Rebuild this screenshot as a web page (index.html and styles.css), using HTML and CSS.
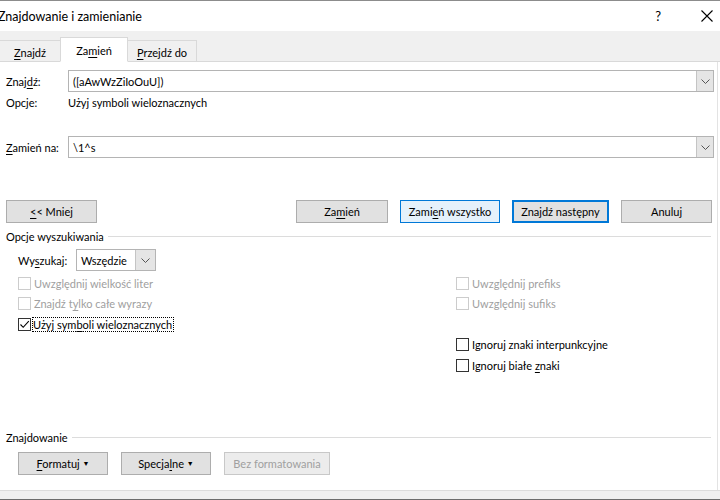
FILE: index.html
```html
<!DOCTYPE html>
<html>
<head>
  <title>Znajdowanie i zamienianie</title>
  <link rel="stylesheet" href="styles.css">
</head>
<body>
  <div class="titlebar">
    <span class="title">Znajdowanie i zamienianie</span>
    <span class="help">?</span>
    <svg class="close" width="12" height="12" viewBox="0 0 12 12">
      <path d="M0.5 0.5 L11.5 11.5 M11.5 0.5 L0.5 11.5" stroke="#000" stroke-width="1.1" fill="none"/>
    </svg>
  </div>

  <div class="tabs">
    <div class="tab t-find"><u>Z</u>najdź</div>
    <div class="tab t-replace active">Za<u>m</u>ień</div>
    <div class="tab t-goto"><u>P</u>rzejdź do</div>
    <div class="tab-rest"></div>
  </div>

  <div class="panel">
    <div class="field-row find-row">
      <label class="label">Znaj<u>d</u>ź:</label>
      <div class="combo">
        <span class="combo-text">([aAwWzZiIoOuU])</span>
        <span class="combo-btn">
          <svg width="9" height="5" viewBox="0 0 9 5"><path d="M0.5 0.5 L4.5 4.5 L8.5 0.5" stroke="#555" fill="none"/></svg>
        </span>
      </div>
    </div>
    <div class="opts-row">
      <span class="label">Opcje:</span>
      <span>Użyj symboli wieloznacznych</span>
    </div>

    <div class="field-row replace-row">
      <label class="label"><u>Z</u>amień na:</label>
      <div class="combo">
        <span class="combo-text">\1^s</span>
        <span class="combo-btn">
          <svg width="9" height="5" viewBox="0 0 9 5"><path d="M0.5 0.5 L4.5 4.5 L8.5 0.5" stroke="#555" fill="none"/></svg>
        </span>
      </div>
    </div>

    <div class="button-row">
      <button class="btn w-less"><u>&lt;</u>&lt; Mniej</button>
      <div class="button-group">
        <button class="btn w-replace">Za<u>m</u>ień</button>
        <button class="btn w-all hover">Zami<u>e</u>ń wszystko</button>
        <button class="btn w-next default">Znajdź następny</button>
        <button class="btn w-cancel">Anuluj</button>
      </div>
    </div>

    <div class="group-head search-head">
      <span>Opcje wyszukiwania</span>
      <div class="group-line"></div>
    </div>

    <div class="search-where">
      <span class="where-label">Wy<u>s</u>zukaj:</span>
      <div class="select">
        <span class="select-text">Wszędzie</span>
        <span class="select-btn">
          <svg width="9" height="5" viewBox="0 0 9 5"><path d="M0.5 0.5 L4.5 4.5 L8.5 0.5" stroke="#555" fill="none"/></svg>
        </span>
      </div>
    </div>

    <div class="options">
      <div class="col">
        <div class="check disabled"><span class="box"></span><span>Uwzględnij wielkość liter</span></div>
        <div class="check disabled"><span class="box"></span><span>Znajdź t<u>y</u>lko całe wyrazy</span></div>
        <div class="check">
          <span class="box">
            <svg width="11" height="11" viewBox="0 0 11 11"><path d="M1.5 5.5 L4.2 8.3 L9.8 2.2" stroke="#000" stroke-width="1.1" fill="none"/></svg>
          </span>
          <span class="focus">Użyj sym<u>b</u>oli wieloznacznych</span>
        </div>
      </div>
      <div class="col">
        <div class="check disabled"><span class="box"></span><span>Uwzględnij prefiks</span></div>
        <div class="check disabled"><span class="box"></span><span>Uwzględnij sufiks</span></div>
        <div class="check-gap"></div>
        <div class="check"><span class="box"></span><span>Ignoruj znaki interpunkcyjne</span></div>
        <div class="check"><span class="box"></span><span>Ignoruj białe <u>z</u>naki</span></div>
      </div>
    </div>

    <div class="group-head find-head">
      <span>Znajdowanie</span>
      <div class="group-line"></div>
    </div>

    <div class="format-row">
      <button class="btn w-fmt"><u>F</u>ormatuj <span class="caret">&#9660;</span></button>
      <button class="btn w-fmt">Specja<u>l</u>ne <span class="caret">&#9660;</span></button>
      <button class="btn w-none" disabled>Bez formatowania</button>
    </div>
  </div>

  <div class="bottom"></div>
</body>
</html>
```

FILE: styles.css
```css
body {
  margin: 0;
  width: 720px;
  height: 500px;
  overflow: hidden;
  background-color: #fff;
  font-family: Lato, "Noto Sans", sans-serif;
  font-size: 11px;
  color: #000;
}

u {
  text-decoration-thickness: 1px;
  text-underline-offset: 2px;
}

/* title bar */

.titlebar {
  height: 30px;
  border-top: 1px solid #8c8c8c;
  display: flex;
  align-items: center;
  background-color: #fff;
}

.title {
  margin-left: -2px;
  font-size: 12.5px;
  flex: 1;
  white-space: nowrap;
}

.help {
  font-size: 13px;
  margin-right: 40px;
}

.close {
  margin-right: 7px;
}

/* tabs */

.tabs {
  height: 31px;
  background-color: #f0f0f0;
  display: flex;
  align-items: flex-end;
}

.tab {
  height: 20px;
  line-height: 24px;
  text-align: center;
  white-space: nowrap;
  border: 1px solid #d9d9d9;
  background-color: #f0f0f0;
  margin-right: -1px;
}

.t-find {
  width: 60px;
  border-left: none;
}

.t-replace {
  width: 66px;
}

.t-goto {
  width: 68px;
}

.tab.active {
  height: 23px;
  line-height: 25px;
  background-color: #fff;
  border-bottom-color: #fff;
  position: relative;
  z-index: 1;
}

.tab-rest {
  flex: 1;
  border-bottom: 1px solid #d9d9d9;
}

/* panel */

.panel {
  height: 428px;
  border-right: 1px solid #e3e3e3;
  margin-right: 2px;
  display: flex;
  flex-direction: column;
}

.label {
  width: 62px;
  padding-left: 6px;
  white-space: nowrap;
}

.field-row {
  display: flex;
  align-items: center;
}

.find-row {
  margin-top: 8px;
}

.replace-row {
  margin-top: 25px;
}

.combo {
  width: 644px;
  height: 20px;
  border: 1px solid #b4b4b4;
  display: flex;
  align-items: center;
}

.combo-text {
  flex: 1;
  padding-left: 4px;
}

.combo-btn,
.select-btn {
  width: 16px;
  height: 20px;
  background-color: #e5e5e5;
  border-left: 1px solid #c4c4c4;
  display: flex;
  align-items: center;
  justify-content: center;
}

.opts-row {
  display: flex;
  height: 16px;
  line-height: 16px;
  margin-top: 3px;
}

/* buttons */

.button-row {
  display: flex;
  margin-top: 42px;
  padding: 0 5px 0 6px;
}

.button-group {
  margin-left: auto;
  display: flex;
  gap: 12px;
}

.btn {
  height: 23px;
  border: 1px solid #adadad;
  background-color: #e1e1e1;
  font-family: inherit;
  font-size: 11px;
  color: #000;
  padding: 0;
  white-space: nowrap;
}

.btn.hover {
  background-color: #e5f1fb;
  border-color: #0078d7;
}

.btn.default {
  border: 2px solid #0078d7;
}

.btn[disabled] {
  background-color: #ececec;
  border-color: #c8c8c8;
  color: #a0a0a0;
}

.w-less { width: 91px; }
.w-replace { width: 92px; }
.w-all { width: 100px; }
.w-next { width: 97px; }
.w-cancel { width: 91px; }
.w-fmt { width: 90px; }
.w-none { width: 106px; }

.caret {
  font-size: 7px;
  vertical-align: 2px;
}

/* groups */

.group-head {
  display: flex;
  align-items: center;
  gap: 4px;
  padding: 0 6px;
  height: 16px;
}

.search-head {
  margin-top: 5px;
}

.group-line {
  flex: 1;
  border-top: 1px solid #dcdcdc;
}

.search-where {
  display: flex;
  align-items: center;
  padding-left: 18px;
  margin-top: 5px;
}

.where-label {
  width: 58px;
}

.select {
  width: 78px;
  height: 20px;
  border: 1px solid #b4b4b4;
  display: flex;
  align-items: center;
}

.select-text {
  flex: 1;
  padding-left: 4px;
}

.select-btn {
  width: 19px;
}

.options {
  display: grid;
  grid-template-columns: 438px 1fr;
  padding-left: 18px;
  margin-top: 2px;
}

.check {
  display: flex;
  align-items: center;
  height: 20.5px;
  white-space: nowrap;
}

.check-gap {
  height: 20.5px;
}

.box {
  width: 11px;
  height: 11px;
  border: 1px solid #333;
  margin-right: 3px;
  display: flex;
  align-items: center;
  justify-content: center;
  background-color: #fff;
}

.check.disabled {
  color: #a0a0a0;
}

.check.disabled .box {
  border-color: #cccccc;
}

.focus {
  outline: 1px dotted #000;
  padding: 0 1px 0 0;
  margin-left: -1px;
}

.find-head {
  margin-top: auto;
}

.format-row {
  display: flex;
  gap: 13px;
  padding-left: 18px;
  margin-top: 7px;
  margin-bottom: 15px;
}

.bottom {
  height: 8px;
  background-color: #f0f0f0;
  border-top: 1px solid #dcdcdc;
  border-bottom: 2px solid #6d6d6d;
}
```
